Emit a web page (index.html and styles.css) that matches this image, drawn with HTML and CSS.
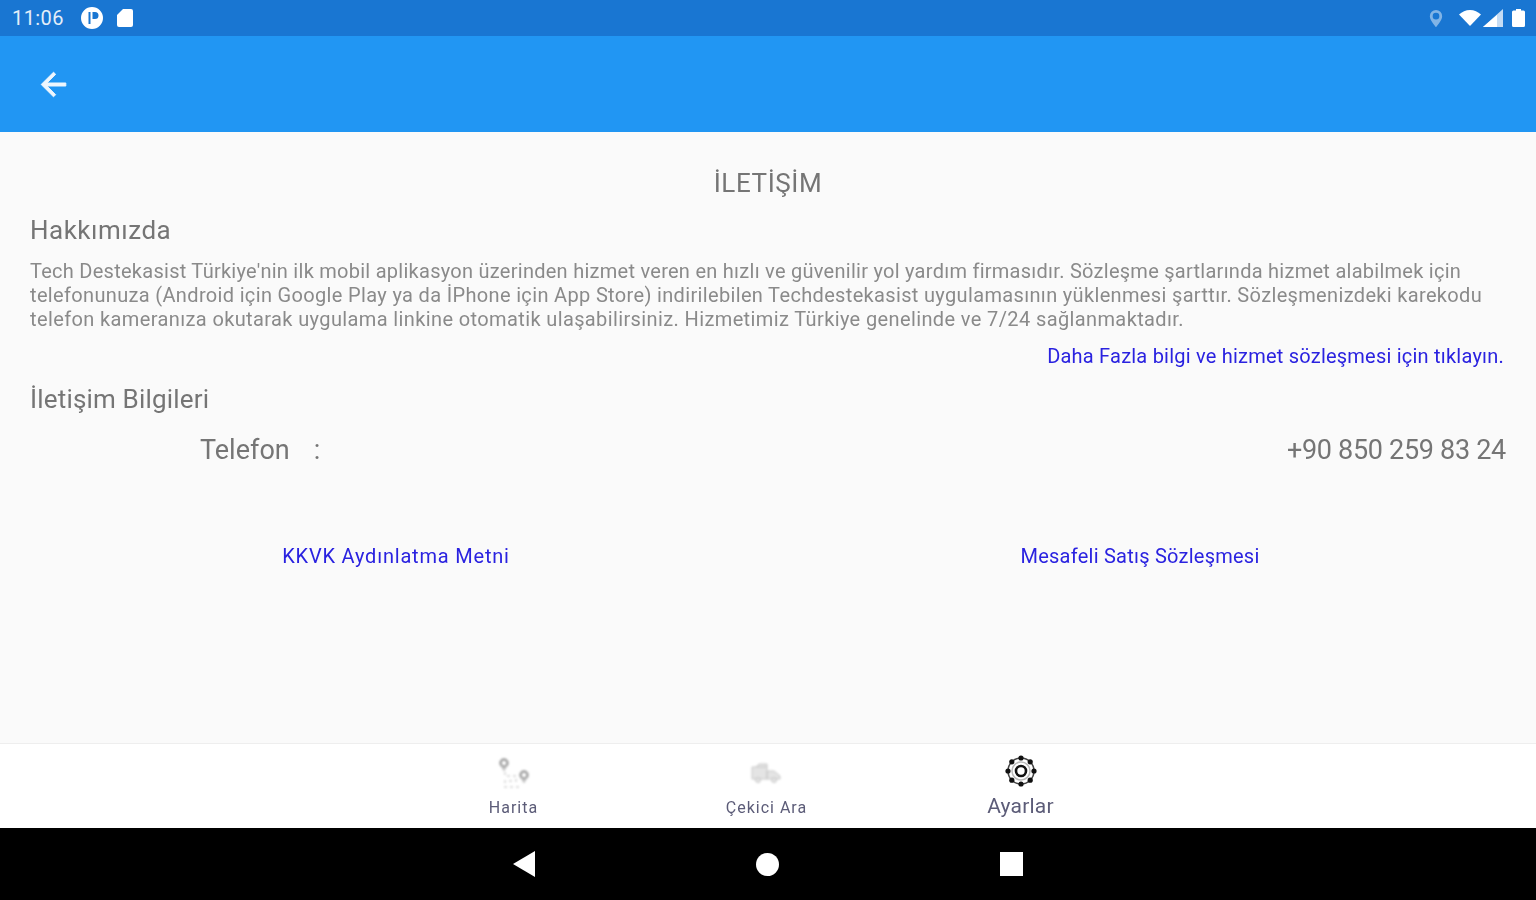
FILE: index.html
```html
<!DOCTYPE html>
<html lang="tr">
<head>
    <meta charset="UTF-8">
    <meta name="viewport" content="width=device-width, initial-scale=1.0">
    <title>İletişim</title>
    <link rel="stylesheet" href="styles.css">
</head>
<body>
    <div class="app">
        <div class="status">
            <span class="time">11:06</span>
            <svg class="st-p" viewBox="0 0 24 24"><path fill-rule="evenodd" d="M12 1a11 11 0 1 0 0 22 11 11 0 0 0 0-22zM10.500 6v12H8.500V6zM12.500 6h2.500a3.500 3.500 0 0 1 0 7h-2.500z"></path></svg>
            <svg class="st-sd" viewBox="0 0 16 18"><path d="M6 0h8a2 2 0 0 1 2 2v14a2 2 0 0 1-2 2H2a2 2 0 0 1-2-2V6z"></path></svg>
            <div class="status-right">
                <svg class="st-pin" viewBox="0 0 16 20"><path fill-rule="evenodd" d="M8 1a6.500 6.500 0 0 0-6.500 6.500C1.500 12 8 19 8 19s6.500-7 6.500-11.500A6.500 6.500 0 0 0 8 1zm0 3a3.500 3.500 0 1 1 0 7 3.500 3.500 0 0 1 0-7z"></path></svg>
                <svg class="st-wifi" viewBox="0 0 22 16"><path d="M0 4.500C3 1.800 6.800 0 11 0s8 1.800 11 4.500L11 16z"></path></svg>
                <svg class="st-signal" viewBox="0 0 20 18"><path d="M20 0v18H0z" opacity=".75"></path><path d="M14 6v12H0z"></path></svg>
                <svg class="st-bat" viewBox="0 0 13 18"><path d="M4 0h5v1.500h2.500a1.500 1.500 0 0 1 1.500 1.500v13.500a1.500 1.500 0 0 1-1.500 1.500h-10A1.500 1.500 0 0 1 0 16.500V3a1.500 1.500 0 0 1 1.500-1.500H4z"></path></svg>
            </div>
        </div>

        <div class="toolbar">
            <svg class="back" viewBox="0 0 24 24"><path d="M20 11H7.830l5.590-5.590L12 4l-8 8 8 8 1.410-1.410L7.830 13H20v-2z"></path></svg>
        </div>

        <div class="content">
            <h1>İLETİŞİM</h1>
            <h2 class="about-title">Hakkımızda</h2>
            <div class="about">
                <p class="line-1">Tech Destekasist Türkiye'nin ilk mobil aplikasyon üzerinden hizmet veren en hızlı ve güvenilir yol yardım firmasıdır. Sözleşme şartlarında hizmet alabilmek için</p>
                <p class="line-2">telefonunuza (Android için Google Play ya da İPhone için App Store) indirilebilen Techdestekasist uygulamasının yüklenmesi şarttır. Sözleşmenizdeki karekodu</p>
                <p class="line-3">telefon kameranıza okutarak uygulama linkine otomatik ulaşabilirsiniz. Hizmetimiz Türkiye genelinde ve 7/24 sağlanmaktadır.</p>
            </div>
            <a class="more" href="#">Daha Fazla bilgi ve hizmet sözleşmesi için tıklayın.</a>
            <h2 class="contact-title">İletişim Bilgileri</h2>
            <div class="phone">
                <span class="phone-label">Telefon</span>
                <span class="phone-sep">:</span>
                <span class="phone-value">+90 850 259 83 24</span>
            </div>
            <div class="links">
                <a class="link-kvkk" href="#">KKVK Aydınlatma Metni</a>
                <a class="link-sales" href="#">Mesafeli Satış Sözleşmesi</a>
            </div>
        </div>

        <div class="tabs">
            <div class="tab">
                <svg class="tab-icon faint" viewBox="0 0 36 36">
                    <circle class="pin" cx="8" cy="10" r="3.500"></circle>
                    <path class="pin-tip" d="M5.500 13l2.500 4 2.500-4"></path>
                    <circle class="pin" cx="28" cy="22" r="3.500"></circle>
                    <path class="pin-tip" d="M25.500 25l2.500 4 2.500-4"></path>
                    <path class="route" d="M9 19v4h11v5H9v6h17"></path>
                </svg>
                <span class="tab-label">Harita</span>
            </div>
            <div class="tab">
                <svg class="tab-icon faint" viewBox="0 0 36 36">
                    <path class="truck" d="M3 14h15v12H3zM18 18h7l6 5v3H18zM7 14l3-3h8v3"></path>
                    <circle class="truck" cx="9" cy="27" r="2.500"></circle>
                    <circle class="truck" cx="25" cy="27" r="2.500"></circle>
                </svg>
                <span class="tab-label">Çekici Ara</span>
            </div>
            <div class="tab tab-active">
                <svg class="tab-icon gear" viewBox="-2 -2 36 36">
                    <circle class="gear-ring" cx="16" cy="16" r="13"></circle>
                    <circle class="gear-petal" cx="16" cy="16" r="9"></circle>
                    <circle class="gear-core" cx="16" cy="16" r="5"></circle>
                    <circle cx="16" cy="3" r="2.600"></circle>
                    <circle cx="25.200" cy="6.800" r="2.600"></circle>
                    <circle cx="29" cy="16" r="2.600"></circle>
                    <circle cx="25.200" cy="25.200" r="2.600"></circle>
                    <circle cx="16" cy="29" r="2.600"></circle>
                    <circle cx="6.800" cy="25.200" r="2.600"></circle>
                    <circle cx="3" cy="16" r="2.600"></circle>
                    <circle cx="6.800" cy="6.800" r="2.600"></circle>
                </svg>
                <span class="tab-label">Ayarlar</span>
            </div>
        </div>

        <div class="navbar">
            <svg class="nav-back" viewBox="0 0 22 26"><path d="M22 0v26L0 13z"></path></svg>
            <span class="nav-home"></span>
            <span class="nav-recent"></span>
        </div>
    </div>
</body>
</html>
```

FILE: styles.css
```css
*{
    margin: 0;
    padding: 0;
    box-sizing: border-box;
}

html, body{
    height: 100%;
    overflow: hidden;
}

body{
    font-family: Roboto, "Liberation Sans", sans-serif;
    background-color: #fafafa;
}

a{
    text-decoration: none;
    color: #2a22e0;
}

.app{
    height: 900px;
    display: flex;
    flex-direction: column;
    filter: blur(.7px);
}

/* status bar */
.status{
    height: 36px;
    flex: none;
    display: flex;
    align-items: center;
    padding: 0 11px 0 12px;
    background-color: #1976d2;
    fill: #fff;
}

.time{
    width: 68px;
    font-size: 20px;
    letter-spacing: .4px;
    color: #e3eef9;
}

.st-p{
    width: 24px;
    height: 24px;
}

.st-sd{
    width: 16px;
    height: 18px;
    margin-left: 13px;
}

.status-right{
    margin-left: auto;
    display: flex;
    align-items: center;
}

.st-pin{
    width: 16px;
    height: 19px;
    margin-right: 15px;
    opacity: .45;
}

.st-wifi{
    width: 22px;
    height: 16px;
}

.st-signal{
    width: 20px;
    height: 18px;
    margin-left: 2px;
}

.st-bat{
    width: 13px;
    height: 18px;
    margin-left: 9px;
}

.toolbar{
    height: 96px;
    flex: none;
    display: flex;
    align-items: center;
    padding-left: 35px;
    background-color: #2196f3;
}

.back{
    width: 37px;
    height: 37px;
    fill: #eef6fe;
    stroke: #eef6fe;
    stroke-width: .6;
}

/* content */
.content{
    flex: 1;
    display: flex;
    flex-direction: column;
    padding: 0 30px;
    color: #757575;
}

h1{
    margin-top: 34px;
    font-size: 26px;
    line-height: 34px;
    font-weight: 400;
    letter-spacing: .6px;
    text-align: center;
}

h2{
    font-size: 26px;
    line-height: 34px;
    font-weight: 400;
}

.about-title{
    margin-top: 13px;
    letter-spacing: .5px;
}

.about{
    margin-top: 12px;
    font-size: 20px;
    line-height: 24px;
    white-space: nowrap;
    color: #8a8a8a;
}

.line-1{
    letter-spacing: .265px;
}

.line-2{
    letter-spacing: .34px;
}

.line-3{
    letter-spacing: .38px;
}

.more{
    margin-top: 13px;
    align-self: flex-end;
    padding-right: 2px;
    font-size: 20px;
    line-height: 24px;
    letter-spacing: .22px;
}

.contact-title{
    margin-top: 14px;
    letter-spacing: .18px;
}

.phone{
    margin-top: 17px;
    display: flex;
    align-items: center;
    padding-left: 170px;
    font-size: 27px;
    line-height: 34px;
}

.phone-sep{
    margin-left: 24px;
}

.phone-value{
    margin-left: auto;
    letter-spacing: -.3px;
}

.links{
    margin: 77px -6px 0;
    display: grid;
    grid-template-columns: 1fr 1fr;
    text-align: center;
    font-size: 20px;
    line-height: 24px;
}

.link-kvkk{
    letter-spacing: .8px;
}

.link-sales{
    letter-spacing: .24px;
}

/* bottom tabs */
.tabs{
    height: 85px;
    flex: none;
    display: flex;
    justify-content: center;
    padding-right: 3px;
    background-color: #fff;
    border-top: 1px solid #eeeeee;
}

.tab{
    width: 254px;
    display: flex;
    flex-direction: column;
    align-items: center;
    padding-top: 9px;
}

.tab:first-child{
    padding-left: 2px;
}

.tab-icon{
    width: 36px;
    height: 36px;
}

.tab-label{
    margin-top: 9px;
    font-size: 16px;
    line-height: 20px;
    letter-spacing: 1px;
    color: #5c5c78;
}

.tab-active .tab-label{
    margin-top: 7px;
    font-size: 21px;
    letter-spacing: .2px;
}

.tab-active .tab-icon{
    fill: #111;
}

.gear-ring{
    fill: none;
    stroke: #444;
    stroke-width: 1.500;
}

.gear-petal{
    fill: none;
    stroke: #bbb;
    stroke-width: 1.500;
}

.gear-core{
    fill: none;
    stroke: #111;
    stroke-width: 2.600;
}

.faint{
    filter: blur(.8px);
}

.pin{
    fill: none;
    stroke: #a0a0a0;
    stroke-width: 2.500;
}

.pin-tip{
    fill: none;
    stroke: #c0c0c0;
    stroke-width: 1.500;
}

.route{
    fill: none;
    stroke: #d4d4d4;
    stroke-width: 1.500;
    stroke-dasharray: 3 3;
}

.truck{
    fill: #e4e4e4;
    stroke: #c8c8c8;
    stroke-width: 1;
}

/* android nav */
.navbar{
    height: 72px;
    flex: none;
    display: flex;
    align-items: center;
    justify-content: center;
    gap: 221px;
    background-color: #000;
}

.nav-back{
    width: 22px;
    height: 26px;
    fill: #fff;
}

.nav-home{
    width: 23px;
    height: 23px;
    border-radius: 50%;
    background-color: #fff;
}

.nav-recent{
    width: 23px;
    height: 24px;
    background-color: #fff;
}
```
